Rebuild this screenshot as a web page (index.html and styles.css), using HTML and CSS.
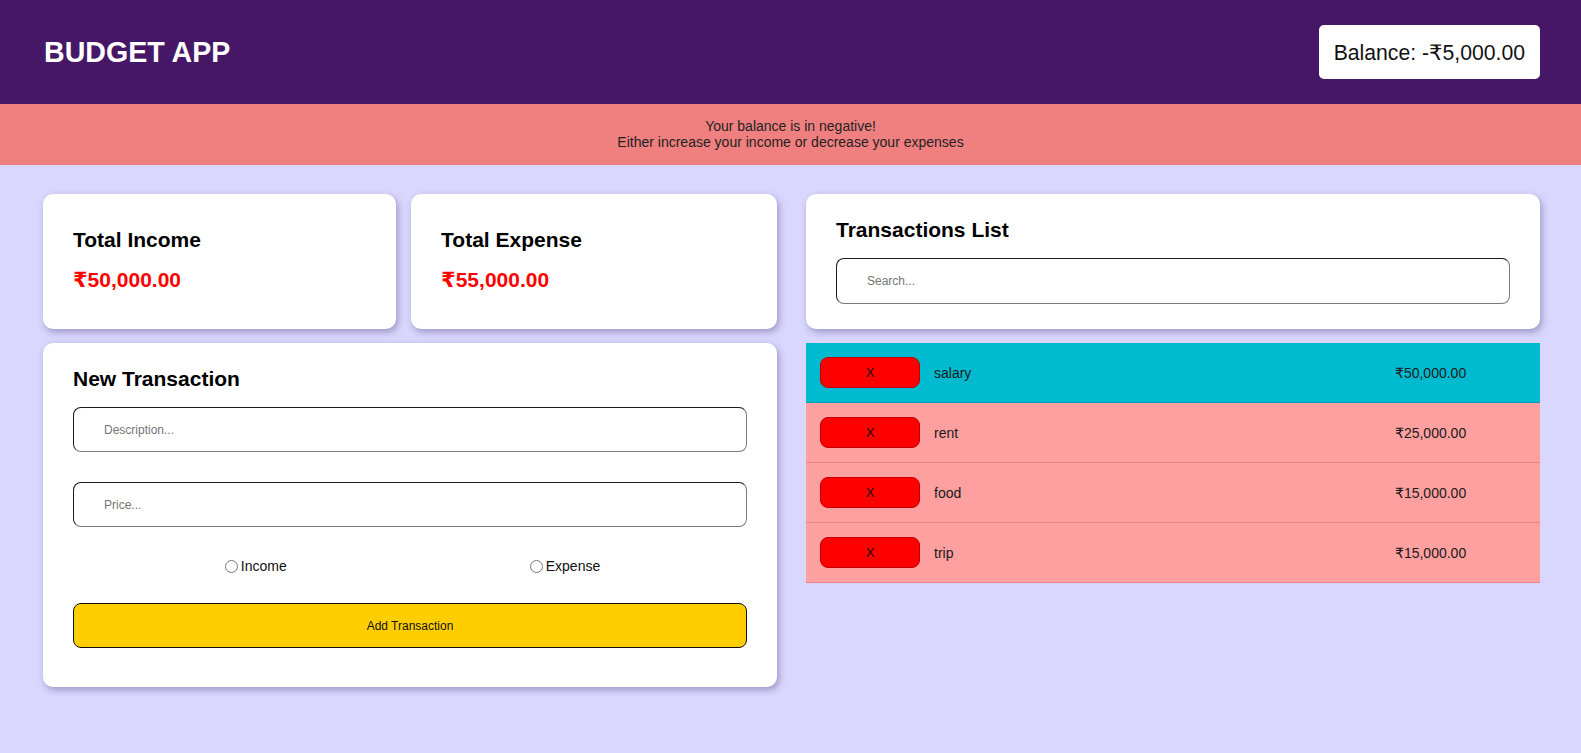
FILE: index.html
```html
<!DOCTYPE html>
<html lang="en">
<head>
<meta charset="utf-8">
<title>Budget App</title>
<link rel="stylesheet" href="styles.css">
</head>
<body>
<header class="topbar">
  <h1 class="brand">BUDGET APP</h1>
  <div class="balance">Balance: -₹5,000.00</div>
</header>
<div class="alert">
  <div>Your balance is in negative!</div>
  <div>Either increase your income or decrease your expenses</div>
</div>
<main class="layout">
  <section class="col">
    <div class="totals">
      <div class="card stat-card">
        <h3 class="card-title">Total Income</h3>
        <div class="stat-amount">₹50,000.00</div>
      </div>
      <div class="card stat-card">
        <h3 class="card-title">Total Expense</h3>
        <div class="stat-amount">₹55,000.00</div>
      </div>
    </div>
    <form class="card form-card">
      <h3 class="card-title">New Transaction</h3>
      <input class="field field-gap" type="text" placeholder="Description...">
      <input class="field" type="text" placeholder="Price...">
      <div class="radios">
        <label class="radio-label"><input class="radio" type="radio" name="type">Income</label>
        <label class="radio-label"><input class="radio" type="radio" name="type">Expense</label>
      </div>
      <button class="add-btn" type="button">Add Transaction</button>
    </form>
  </section>
  <section class="col">
    <div class="card list-card">
      <h3 class="card-title">Transactions List</h3>
      <input class="field" type="text" placeholder="Search...">
    </div>
    <ul class="tx-list">
      <li class="tx tx-income"><button class="del" type="button">X</button><span class="tx-desc">salary</span><span class="tx-amt">₹50,000.00</span></li>
      <li class="tx tx-expense"><button class="del" type="button">X</button><span class="tx-desc">rent</span><span class="tx-amt">₹25,000.00</span></li>
      <li class="tx tx-expense"><button class="del" type="button">X</button><span class="tx-desc">food</span><span class="tx-amt">₹15,000.00</span></li>
      <li class="tx tx-expense"><button class="del" type="button">X</button><span class="tx-desc">trip</span><span class="tx-amt">₹15,000.00</span></li>
    </ul>
  </section>
</main>
</body>
</html>
```
FILE: styles.css
```css
* { box-sizing: border-box; }

html, body {
  margin: 0;
  min-height: 100%;
}

body {
  font-family: "Liberation Sans", Arial, "DejaVu Sans", sans-serif;
  background: #dad7fe;
  color: #000;
  min-height: 753px;
}

.topbar {
  height: 104px;
  background: #461766;
  display: flex;
  align-items: center;
  justify-content: space-between;
  padding: 0 41px 0 44px;
}

.brand {
  margin: 0;
  color: #fff;
  font-size: 28.6px;
  font-weight: bold;
}

.balance {
  height: 54px;
  background: #fff;
  border-radius: 5px;
  padding: 0 15px;
  display: flex;
  align-items: center;
  font-size: 21.2px;
  color: #111;
}

.alert {
  background: #f08080;
  text-align: center;
  font-size: 14px;
  line-height: 16px;
  padding: 14px 0 15px;
  color: #222;
}

.layout {
  display: grid;
  grid-template-columns: 1fr 1fr;
  column-gap: 29px;
  padding: 29px 41px 0 43px;
  align-items: start;
}

.col {
  display: flex;
  flex-direction: column;
  gap: 14px;
}

.totals {
  display: flex;
  gap: 15px;
}

.card {
  background: #fff;
  border-radius: 10px;
  box-shadow: 2px 3px 7px rgba(40, 30, 90, 0.35);
}

.stat-card {
  flex: 1 1 auto;
  padding: 34px 30px 37px;
}

.card-title {
  margin: 0 0 16px;
  font-size: 21px;
  font-weight: bold;
  line-height: 24px;
}

.stat-amount {
  font-size: 21px;
  line-height: 24px;
  font-weight: bold;
  color: #ff0000;
}

.form-card {
  margin: 0;
  padding: 24px 30px 39px;
  display: flex;
  flex-direction: column;
}

.field {
  display: block;
  width: 100%;
  height: 45px;
  padding: 0 30px;
  font-family: "Liberation Sans", Arial, sans-serif;
  font-size: 12px;
  border-radius: 8px;
  border: 1px solid;
  border-color: #1c1c1c #7a7a7a #7a7a7a #1c1c1c;
  background: #fff;
  outline: none;
}

.list-card .field {
  height: 46px;
}

.field::placeholder {
  color: #757575;
}

.field-gap {
  margin-bottom: 30px;
}

.radios {
  display: flex;
  justify-content: center;
  gap: 238px;
  margin-top: 30px;
  height: 18px;
  align-items: center;
}

.radio-label {
  display: flex;
  align-items: center;
  font-size: 14px;
  color: #111;
}

.radio {
  width: 13px;
  height: 13px;
  margin: 0 3px 0 5px;
}

.add-btn {
  margin-top: 28px;
  height: 45px;
  width: 100%;
  background: #ffce00;
  border: 1px solid #111;
  border-radius: 8px;
  font-family: "Liberation Sans", Arial, sans-serif;
  font-size: 12px;
  color: #111;
}

.list-card {
  padding: 24px 30px 25px;
}

.tx-list {
  list-style: none;
  margin: 0;
  padding: 0;
}

.tx {
  height: 60px;
  display: flex;
  align-items: center;
  padding-left: 14px;
  border-bottom: 1px solid rgba(200, 80, 80, 0.35);
  font-size: 14px;
  color: #1a1a1a;
}

.tx-income {
  background: #00bad0;
  border-bottom-color: rgba(0, 90, 110, 0.25);
}

.tx-expense {
  background: #ffa0a0;
}

.del {
  width: 100px;
  height: 31px;
  background: #ff0000;
  border: 1px solid #c10000;
  border-radius: 8px;
  font-family: "Liberation Sans", Arial, sans-serif;
  font-size: 13px;
  color: #111;
  margin-right: 14px;
}

.tx-desc {
  flex: 1 1 auto;
}

.tx-amt {
  flex: 0 0 145px;
}
```
